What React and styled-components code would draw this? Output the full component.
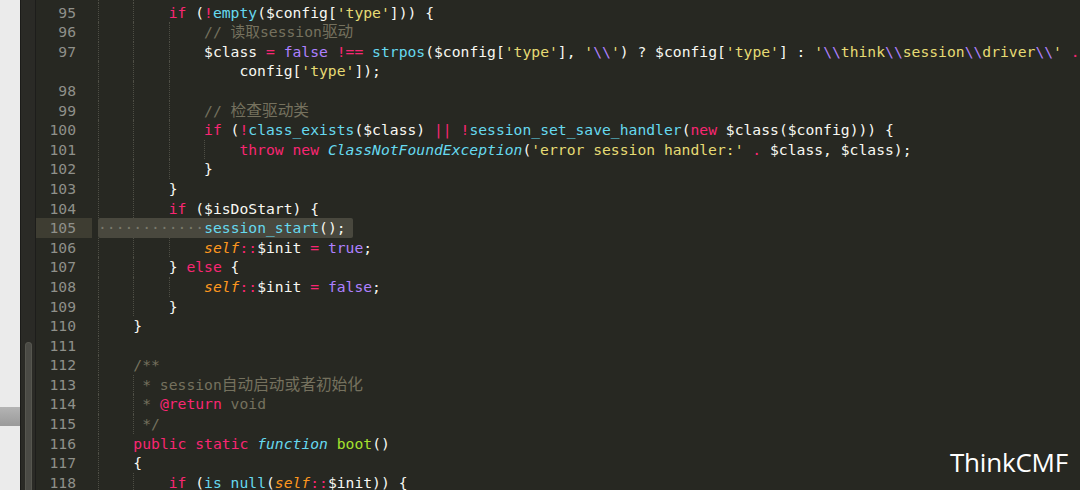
import React from 'react';
import styled, { createGlobalStyle } from 'styled-components';

const GlobalStyle = createGlobalStyle`
  html, body {
    margin: 0;
    padding: 0;
    background: #272822;
    overflow: hidden;
  }
`;

const Screen = styled.div`
  position: relative;
  display: flex;
  width: 1080px;
  height: 490px;
  overflow: hidden;
  background: #272822;
`;

const SidePanel = styled.div`
  width: 20px;
  flex-shrink: 0;
  background: #ebebeb;
  padding-top: 407px;
  box-sizing: border-box;
`;

const PanelBand = styled.div`
  height: 19px;
  background: linear-gradient(#b4b4b4, #9a9a9a);
`;

const Track = styled.div`
  width: 16px;
  flex-shrink: 0;
  display: flex;
  flex-direction: column;
  box-sizing: border-box;
  padding: 342px 0 0 4px;
  background: #2a2a26;
  border-left: 1px solid #1b1b19;
  border-right: 1px solid #1d1d1b;
`;

const Thumb = styled.div`
  width: 7px;
  flex: 1;
  border-radius: 4px 4px 0 0;
  background: #4a4a45;
  border: 1px solid #56564f;
  border-bottom: none;
  box-sizing: border-box;
`;

const Editor = styled.div`
  flex: 1;
  display: flex;
  flex-direction: column;
  margin-top: -17px;
  font-family: 'DejaVu Sans Mono', 'Noto Sans CJK SC', monospace;
  font-size: 14.7px;
  color: #f8f8f2;
`;

const Row = styled.div`
  display: flex;
  height: 19.6px;
  line-height: 19.6px;
  flex-shrink: 0;
`;

const Gutter = styled.div`
  width: 62px;
  flex-shrink: 0;
`;

const Num = styled.div`
  width: 56px;
  height: 100%;
  box-sizing: border-box;
  padding-right: 16px;
  text-align: right;
  color: #8f908a;
  background: ${(p) => (p.$current ? '#3e3d32' : 'transparent')};
`;

const Code = styled.div`
  white-space: pre;
  display: flex;
  align-items: stretch;
`;

const Guide = styled.span`
  display: inline-block;
  width: ${(p) => p.$w}ch;
  height: 100%;
  box-sizing: border-box;
  border-left: 1px dotted #4e4e45;
`;

const Pad = styled.span`
  display: inline-block;
  width: ${(p) => p.$n}ch;
`;

const Selection = styled.span`
  display: inline-block;
  height: 100%;
  padding-right: 7px;
  border-radius: 2px;
  background: #49483e;
`;

const Dots = styled.span`
  color: #7a796b;
`;

const colors = {
  t: '#f8f8f2',
  k: '#f92672',
  o: '#f92672',
  f: '#66d9ef',
  i: '#66d9ef',
  s: '#e6db74',
  e: '#ae81ff',
  n: '#ae81ff',
  c: '#75715e',
  cj: '#75715e',
  self: '#fd971f',
  g: '#a6e22e',
};

const Tok = styled.span`
  color: ${(p) => colors[p.$t]};
  font-style: ${(p) => (p.$t === 'i' || p.$t === 'self' ? 'italic' : 'normal')};
  font-size: ${(p) => (p.$t === 'cj' ? '15.7px' : 'inherit')};
`;

const Watermark = styled.div`
  position: absolute;
  right: 12px;
  bottom: 10px;
  font-family: 'Open Sans', 'Noto Sans', sans-serif;
  font-size: 26px;
  color: #ffffff;
  letter-spacing: -0.2px;
`;

// [number, indent, guides, tokens, selected]
const lines = [
  [94, 8, 2, [['t', '}']]],
  [95, 8, 2, [['k', 'if'], ['t', ' ('], ['o', '!'], ['f', 'empty'], ['t', '($config['], ['s', "'type'"], ['t', '])) {']]],
  [96, 12, 3, [['c', '// 读取'], ['c', 'session'], ['cj', '驱动']]],
  [97, 12, 3, [
    ['t', '$class '], ['o', '='], ['t', ' '], ['n', 'false'], ['t', ' '], ['o', '!=='], ['t', ' '],
    ['f', 'strpos'], ['t', '($config['], ['s', "'type'"], ['t', '], '], ['s', "'"], ['e', '\\\\'], ['s', "'"],
    ['t', ') ? $config['], ['s', "'type'"], ['t', '] : '], ['s', "'"], ['e', '\\\\'], ['s', 'think'],
    ['e', '\\\\'], ['s', 'session'], ['e', '\\\\'], ['s', 'driver'], ['e', '\\\\'], ['s', "'"], ['t', ' '],
    ['o', '.'], ['t', ' '], ['f', 'ucwords'], ['t', '($'],
  ]],
  [null, 16, 3, [['t', 'config['], ['s', "'type'"], ['t', ']);']]],
  [98, 0, 3, []],
  [99, 12, 3, [['c', '// '], ['cj', '检查驱动类']]],
  [100, 12, 3, [
    ['k', 'if'], ['t', ' ('], ['o', '!'], ['f', 'class_exists'], ['t', '($class) '], ['o', '||'], ['t', ' '],
    ['o', '!'], ['f', 'session_set_save_handler'], ['t', '('], ['k', 'new'], ['t', ' $class($config))) {'],
  ]],
  [101, 16, 4, [
    ['k', 'throw'], ['t', ' '], ['k', 'new'], ['t', ' '], ['i', 'ClassNotFoundException'], ['t', '('],
    ['s', "'error session handler:'"], ['t', ' '], ['o', '.'], ['t', ' $class, $class);'],
  ]],
  [102, 12, 3, [['t', '}']]],
  [103, 8, 2, [['t', '}']]],
  [104, 8, 2, [['k', 'if'], ['t', ' ($isDoStart) {']]],
  [105, 12, 0, [['f', 'session_start'], ['t', '();']], true],
  [106, 12, 3, [['self', 'self'], ['o', '::'], ['t', '$init '], ['o', '='], ['t', ' '], ['n', 'true'], ['t', ';']]],
  [107, 8, 2, [['t', '} '], ['k', 'else'], ['t', ' {']]],
  [108, 12, 3, [['self', 'self'], ['o', '::'], ['t', '$init '], ['o', '='], ['t', ' '], ['n', 'false'], ['t', ';']]],
  [109, 8, 2, [['t', '}']]],
  [110, 4, 1, [['t', '}']]],
  [111, 0, 1, []],
  [112, 4, 1, [['c', '/**']]],
  [113, 5, 2, [['c', '* session'], ['cj', '自动启动或者初始化']]],
  [114, 5, 2, [['c', '* '], ['k', '@return'], ['c', ' void']]],
  [115, 5, 2, [['c', '*/']]],
  [116, 4, 1, [['k', 'public'], ['t', ' '], ['k', 'static'], ['t', ' '], ['i', 'function'], ['t', ' '], ['g', 'boot'], ['t', '()']]],
  [117, 4, 1, [['t', '{']]],
  [118, 8, 2, [['k', 'if'], ['t', ' ('], ['f', 'is_null'], ['t', '('], ['self', 'self'], ['o', '::'], ['t', '$init)) {']]],
];

function Indent({ indent, guides }) {
  const items = [];
  const blank = indent === 0;
  let used = 0;
  for (let g = 0; g < guides; g++) {
    const w = blank ? 4 : Math.min(4, indent - g * 4);
    if (w <= 0) break;
    items.push(<Guide key={g} $w={w} />);
    used += w;
  }
  const rest = indent - used;
  if (rest > 0) items.push(<Pad key="p" $n={rest} />);
  return items;
}

function Line({ line }) {
  const [num, indent, guides, tokens, selected] = line;
  const body = tokens.map(([t, text], i) => (
    <Tok key={i} $t={t}>{text}</Tok>
  ));
  return (
    <Row>
      <Gutter>
        <Num $current={selected}>{num}</Num>
      </Gutter>
      <Code>
        {selected ? (
          <Selection>
            <Dots>{'·'.repeat(indent)}</Dots>
            {body}
          </Selection>
        ) : (
          <>
            <Indent indent={indent} guides={guides} />
            {body}
          </>
        )}
      </Code>
    </Row>
  );
}

export default function App() {
  return (
    <Screen>
      <GlobalStyle />
      <SidePanel>
        <PanelBand />
      </SidePanel>
      <Track>
        <Thumb />
      </Track>
      <Editor>
        {lines.map((line, i) => (
          <Line key={i} line={line} />
        ))}
      </Editor>
      <Watermark>ThinkCMF</Watermark>
    </Screen>
  );
}
